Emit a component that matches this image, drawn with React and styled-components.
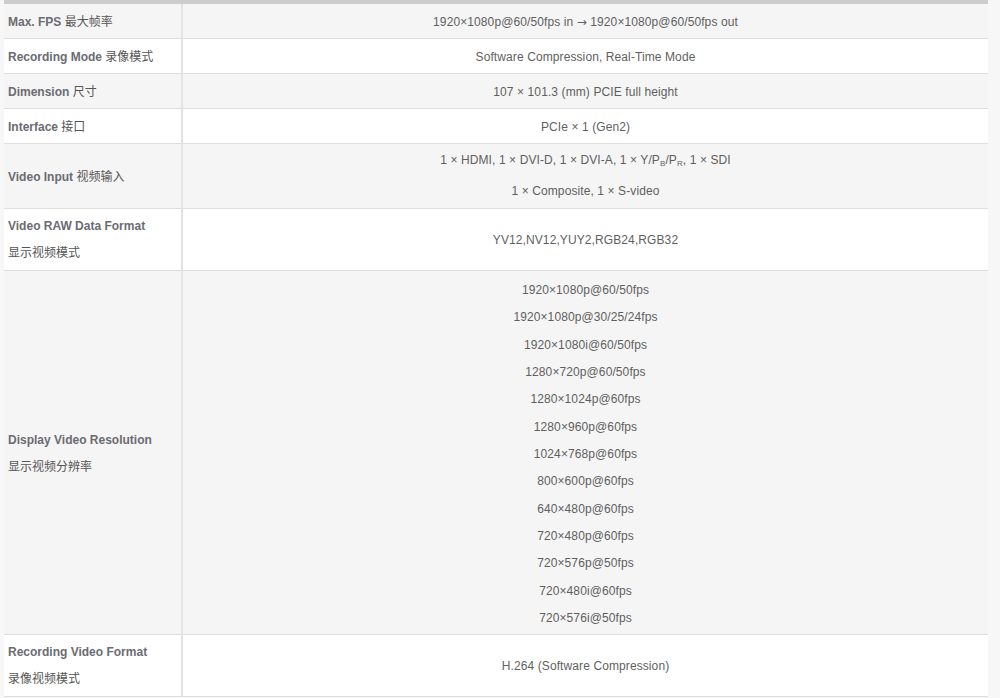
import React from "react";
import styled, { createGlobalStyle } from "styled-components";

const GlobalStyle = createGlobalStyle`
  html, body {
    margin: 0;
    padding: 0;
    background: #f7f7f7;
  }
  body {
    font-family: "Liberation Sans", Arial, "Noto Sans CJK SC", sans-serif;
  }
`;

const Page = styled.div`
  padding: 0 12px 0 4px;
`;

const Table = styled.table`
  width: 984px;
  border-collapse: collapse;
  border-top: 4px solid #cccccc;
  font-size: 12px;
  color: #666666;
`;

const Row = styled.tr`
  background: ${(p) => (p.$odd ? "#f5f5f5" : "#ffffff")};
  border-bottom: 1px solid #dddddd;
`;

const Label = styled.td`
  width: 169px;
  padding: ${(p) => p.$pad || "10px 4px 9px"};
  border-right: 2px solid #e2e2e2;
  vertical-align: middle;
  line-height: ${(p) => p.$lh || "14px"};
  font-weight: bold;
  color: #6b6b73;
  white-space: nowrap;
`;

const Cn = styled.span`
  font-weight: normal;
  color: #555555;
  font-family: "Noto Sans CJK SC", sans-serif;
`;

const Value = styled.td`
  padding: ${(p) => p.$pad || "10px 8px 9px"};
  text-align: center;
  vertical-align: middle;
  line-height: ${(p) => p.$lh || "14px"};
  color: #5f5f5f;
  letter-spacing: 0.1px;
`;

const Line = styled.div``;

const Arrow = styled.span`
  font-family: "DejaVu Sans", sans-serif;
  font-size: 12px;
`;

const Sub = styled.sub`
  font-size: 8px;
  line-height: 0;
  vertical-align: -2px;
`;

const resolutions = [
  "1920×1080p@60/50fps",
  "1920×1080p@30/25/24fps",
  "1920×1080i@60/50fps",
  "1280×720p@60/50fps",
  "1280×1024p@60fps",
  "1280×960p@60fps",
  "1024×768p@60fps",
  "800×600p@60fps",
  "640×480p@60fps",
  "720×480p@60fps",
  "720×576p@50fps",
  "720×480i@60fps",
  "720×576i@50fps",
];

export default function App() {
  return (
    <Page>
      <GlobalStyle />
      <Table>
        <tbody>
          <Row $odd>
            <Label>
              Max. FPS <Cn>最大帧率</Cn>
            </Label>
            <Value>
              1920×1080p@60/50fps in <Arrow>→</Arrow> 1920×1080p@60/50fps out
            </Value>
          </Row>
          <Row>
            <Label>
              Recording Mode <Cn>录像模式</Cn>
            </Label>
            <Value>Software Compression, Real-Time Mode</Value>
          </Row>
          <Row $odd>
            <Label>
              Dimension <Cn>尺寸</Cn>
            </Label>
            <Value>107 × 101.3 (mm) PCIE full height</Value>
          </Row>
          <Row>
            <Label>
              Interface <Cn>接口</Cn>
            </Label>
            <Value>PCIe × 1 (Gen2)</Value>
          </Row>
          <Row $odd>
            <Label>
              Video Input <Cn>视频输入</Cn>
            </Label>
            <Value $pad="1px 8px" $lh="31px">
              <Line>
                1 × HDMI, 1 × DVI-D, 1 × DVI-A, 1 × Y/P<Sub>B</Sub>/P<Sub>R</Sub>, 1 × SDI
              </Line>
              <Line>1 × Composite, 1 × S-video</Line>
            </Value>
          </Row>
          <Row>
            <Label $pad="4px 4px" $lh="26px">
              <Line>Video RAW Data Format</Line>
              <Line>
                <Cn>显示视频模式</Cn>
              </Line>
            </Label>
            <Value>YV12,NV12,YUY2,RGB24,RGB32</Value>
          </Row>
          <Row $odd>
            <Label $pad="6px 4px 4px" $lh="26px">
              <Line>Display Video Resolution</Line>
              <Line>
                <Cn>显示视频分辨率</Cn>
              </Line>
            </Label>
            <Value $pad="6px 8px 2px" $lh="27.33px">
              {resolutions.map((r) => (
                <Line key={r}>{r}</Line>
              ))}
            </Value>
          </Row>
          <Row>
            <Label $pad="4px 4px" $lh="26px">
              <Line>Recording Video Format</Line>
              <Line>
                <Cn>录像视频模式</Cn>
              </Line>
            </Label>
            <Value>H.264 (Software Compression)</Value>
          </Row>
        </tbody>
      </Table>
    </Page>
  );
}
